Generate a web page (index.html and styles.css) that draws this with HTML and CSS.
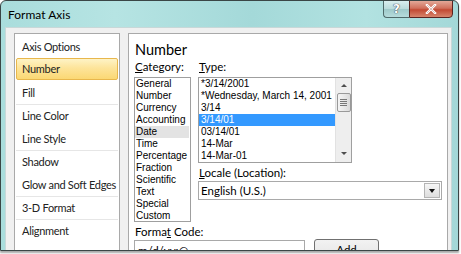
FILE: index.html
```html
<!DOCTYPE html>
<html>
<head>
<meta charset="utf-8">
<link rel="stylesheet" href="styles.css">
</head>
<body>
<div class="window">
  <div class="titlebar">
    <span class="title">Format Axis</span>
    <div class="caption-buttons">
      <div class="btn-help">?</div>
      <div class="btn-close">
        <svg width="12" height="10" viewBox="0 0 12 10"><path d="M2 1 L10 9 M10 1 L2 9" stroke="#fff" stroke-width="2.4" stroke-linecap="square"/><path d="M2 1 L10 9 M10 1 L2 9" stroke="#7a2a22" stroke-width="0.6" opacity="0.5"/></svg>
      </div>
    </div>
  </div>
  <div class="client">
    <div class="nav">
      <div class="group">
        <div class="nav-item">Axis Options</div>
        <div class="nav-item selected">Number</div>
        <div class="nav-item">Fill</div>
      </div>
      <div class="group">
        <div class="nav-item">Line Color</div>
        <div class="nav-item">Line Style</div>
      </div>
      <div class="group">
        <div class="nav-item">Shadow</div>
        <div class="nav-item">Glow and Soft Edges</div>
      </div>
      <div class="group">
        <div class="nav-item">3-D Format</div>
      </div>
      <div class="group">
        <div class="nav-item">Alignment</div>
      </div>
    </div>
    <div class="content">
      <div class="heading">Number</div>
      <div class="cols">
        <div class="col-cat">
          <div class="label"><u>C</u>ategory:</div>
          <div class="listbox cat-list">
            <div class="row">General</div>
            <div class="row">Number</div>
            <div class="row">Currency</div>
            <div class="row">Accounting</div>
            <div class="row hot">Date</div>
            <div class="row">Time</div>
            <div class="row">Percentage</div>
            <div class="row">Fraction</div>
            <div class="row">Scientific</div>
            <div class="row">Text</div>
            <div class="row">Special</div>
            <div class="row">Custom</div>
          </div>
        </div>
        <div class="col-type">
          <div class="label"><u>T</u>ype:</div>
          <div class="listbox type-list">
            <div class="type-rows">
              <div class="row">*3/14/2001</div>
              <div class="row">*Wednesday, March 14, 2001</div>
              <div class="row">3/14</div>
              <div class="row sel">3/14/01</div>
              <div class="row">03/14/01</div>
              <div class="row">14-Mar</div>
              <div class="row">14-Mar-01</div>
            </div>
            <div class="scrollbar">
              <div class="arrow up"></div>
              <div class="thumb"><span></span><span></span><span></span><span></span></div>
              <div class="track"></div>
              <div class="arrow down"></div>
            </div>
          </div>
          <div class="label locale-label"><u>L</u>ocale (Location):</div>
          <div class="combo">
            <span class="combo-text">English (U.S.)</span>
            <div class="combo-btn"><div class="tri"></div></div>
          </div>
        </div>
      </div>
      <div class="label code-label">Forma<u>t</u> Code:</div>
      <div class="code-row">
        <div class="code-input">m/d/yy;@</div>
        <div class="add-btn">Add</div>
      </div>
    </div>
  </div>
</div>
</body>
</html>
```
FILE: styles.css
```css
* { box-sizing: border-box; }
html, body { margin: 0; padding: 0; }
body {
  width: 461px;
  height: 254px;
  background: #ffffff;
  overflow: hidden;
  font-family: Lato, "Open Sans", sans-serif;
}
.window {
  width: 459px;
  height: 251px;
  border: 1px solid #3a4646;
  border-radius: 6px 6px 0 0;
  background: linear-gradient(90deg, #a9dddc 0%, #b6e4e3 25%, #a4d9d9 55%, #b2e2e1 80%, #a3d8d8 100%);
  box-shadow: 0 2px 2px rgba(0,0,0,0.35);
  display: flex;
  flex-direction: column;
  overflow: hidden;
}
.titlebar {
  height: 26px;
  flex: none;
  display: flex;
  align-items: flex-start;
  justify-content: space-between;
}
.title {
  font-size: 12px;
  color: #000;
  margin: 6px 0 0 7px;
}
.caption-buttons {
  display: flex;
  margin-right: 5px;
  margin-top: -1px;
}
.btn-help {
  width: 26px;
  height: 18px;
  border: 1px solid #4f6a6a;
  border-right: none;
  border-radius: 0 0 0 4px;
  background: linear-gradient(#d8eeee, #b9dada 50%, #9ec9c9 51%, #b6dcdc);
  color: #fff;
  font-family: "DejaVu Sans", sans-serif;
  font-weight: bold;
  font-size: 12px;
  text-align: center;
  line-height: 16px;
  text-shadow: 0 0 1px #334, 0 0 1px #334;
}
.btn-close {
  width: 44px;
  height: 18px;
  border: 1px solid #5a2420;
  border-radius: 0 0 4px 0;
  background: linear-gradient(#e3a898, #d0705c 45%, #c24a33 55%, #d7856c);
  display: flex;
  align-items: center;
  justify-content: center;
}
.client {
  flex: 1;
  margin: 0 6px 0 4px;
  background: #f0f0f0;
  border: 1px solid #c8d8d8;
  border-bottom: none;
  display: flex;
  padding: 5px 3px 0 8px;
  gap: 8px;
  min-height: 0;
}
.nav {
  width: 106px;
  flex: none;
  background: #fff;
  border: 1px solid #a9a9a9;
  border-bottom: none;
  padding: 1px 1px 0 1px;
}
.group + .group { border-top: 1px solid #e6e6e6; }
.group + .group .nav-item:first-child { height: 22px; line-height: 20px; }
.nav-item {
  height: 23px;
  line-height: 21px;
  padding-left: 5px;
  font-size: 11px;
  letter-spacing: -0.3px;
  color: #222;
  white-space: nowrap;
  border: 1px solid transparent;
  border-radius: 2px;
}
.nav-item.selected {
  height: 22px;
  line-height: 20px;
  margin-bottom: 1px;
  background: linear-gradient(#fef3c6, #fde49a 45%, #fbd874);
  border-color: #e8b74c;
}
.content {
  flex: 1;
  background: #fff;
  border: 1px solid #a9a9a9;
  border-bottom: none;
  padding: 6px 0 0 5px;
}
.heading {
  font-size: 14.5px;
  color: #000;
  line-height: 20px;
  padding-left: 1px;
}
.label {
  font-size: 11.5px;
  color: #000;
  line-height: 14px;
  white-space: nowrap;
  padding-left: 1px;
}
.cols { display: flex; gap: 7px; }
.listbox {
  border: 1px solid #9f9f9f;
  background: #fff;
  margin-top: 3px;
  font-family: "Liberation Sans", "DejaVu Sans", sans-serif;
  font-size: 10px;
  color: #000;
}
.cat-list { width: 57px; padding: 0 1px 0 0; height: 145px; }
.row { height: 12px; line-height: 12px; padding-left: 1px; white-space: nowrap; overflow: hidden; }
.row.hot { background: #e3e3e3; }
.type-list { width: 154px; height: 86px; display: flex; }
.type-rows { flex: 1; min-width: 0; }
.type-rows .row { padding-left: 2px; }
.row.sel { background: #3399ff; color: #fff; }
.scrollbar {
  width: 16px;
  flex: none;
  background: #eeeeee;
  border-left: 1px solid #e2e2e2;
  display: flex;
  flex-direction: column;
  align-items: center;
}
.arrow { width: 0; height: 0; border-left: 3px solid transparent; border-right: 3px solid transparent; }
.arrow.up { border-bottom: 3px solid #4d4d4d; margin-top: 6px; }
.arrow.down { border-top: 3px solid #4d4d4d; margin-bottom: 7px; }
.thumb {
  width: 14px;
  height: 19px;
  margin-top: 6px;
  border: 1px solid #999;
  border-radius: 2px;
  background: linear-gradient(90deg, #f4f4f4, #e8e8e8 50%, #d9d9d9);
  display: flex;
  flex-direction: column;
  align-items: center;
  justify-content: center;
  gap: 1px;
}
.thumb span { width: 7px; height: 1px; background: #777; }
.track { flex: 1; }
.locale-label { margin-top: 3px; }
.combo {
  width: 244px;
  height: 19px;
  margin-top: 1px;
  border: 1px solid #a9a9a9;
  display: flex;
  align-items: center;
  justify-content: space-between;
  padding: 0 1px 0 2px;
}
.combo-text { font-size: 11.5px; }
.combo-btn {
  width: 16px;
  height: 15px;
  border: 1px solid #b5b5b5;
  background: linear-gradient(#f6f6f6, #dedede);
  display: flex;
  align-items: center;
  justify-content: center;
}
.tri { width: 0; height: 0; border-left: 3.5px solid transparent; border-right: 3.5px solid transparent; border-top: 4px solid #111; }
.code-label { margin-top: 3px; }
.code-row { display: flex; gap: 9px; margin-top: 0; align-items: flex-start; }
.code-input {
  width: 171px;
  height: 22px;
  margin-top: 1px;
  border: 1px solid #a9a9a9;
  font-size: 11.5px;
  padding: 3px 0 0 3px;
}
.add-btn {
  width: 65px;
  height: 22px;
  border: 1px solid #707070;
  border-radius: 3px;
  background: linear-gradient(#f2f2f2, #ebebeb 50%, #dddddd 51%, #cfcfcf);
  font-size: 11.5px;
  text-align: center;
  padding-top: 3px;
}
```
